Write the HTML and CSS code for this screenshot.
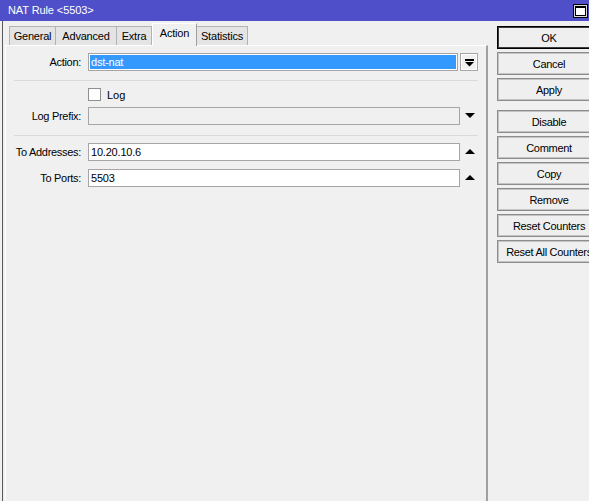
FILE: index.html
```html
<!DOCTYPE html>
<html>
<head>
<meta charset="utf-8">
<title>NAT Rule</title>
<link rel="stylesheet" href="styles.css">
</head>
<body>
<div class="titlebar">
  <span class="title">NAT Rule &lt;5503&gt;</span>
  <svg class="maxbtn" width="15" height="14" viewBox="0 0 15 14">
    <rect x="0.5" y="0.5" width="14" height="13" fill="#d8d8d8" stroke="#000"/>
    <rect x="2.5" y="2.5" width="10" height="9" fill="#fff" stroke="#000"/>
    <rect x="2" y="2" width="11" height="2" fill="#000"/>
  </svg>
</div>
<div class="window">
  <div class="edge"></div>
  <div class="main">
    <div class="tabs">
      <div class="tab t-general">General</div>
      <div class="tab t-advanced">Advanced</div>
      <div class="tab t-extra">Extra</div>
      <div class="tab active t-action">Action</div>
      <div class="tab t-stats">Statistics</div>
    </div>
    <div class="panel">
      <div class="row">
        <label class="lbl">Action:</label>
        <div class="field selected">dst-nat</div>
        <div class="dropbtn">
          <svg width="9" height="8" viewBox="0 0 9 8"><rect x="0" y="0" width="9" height="2" fill="#000"/><polygon points="0,3 9,3 4.5,7.5" fill="#000"/></svg>
        </div>
      </div>
      <div class="sep sep1"></div>
      <div class="checkrow">
        <span class="checkbox"></span>
        <span class="checklbl">Log</span>
      </div>
      <div class="row">
        <label class="lbl">Log Prefix:</label>
        <div class="field wide disabled"></div>
        <div class="arrow">
          <svg width="10" height="6" viewBox="0 0 10 6"><polygon points="0,0 10,0 5,5" fill="#000"/></svg>
        </div>
      </div>
      <div class="sep sep2"></div>
      <div class="row">
        <label class="lbl">To Addresses:</label>
        <div class="field wide">10.20.10.6</div>
        <div class="arrow">
          <svg width="10" height="6" viewBox="0 0 10 6"><polygon points="0,5 10,5 5,0" fill="#000"/></svg>
        </div>
      </div>
      <div class="row row-ports">
        <label class="lbl">To Ports:</label>
        <div class="field wide">5503</div>
        <div class="arrow">
          <svg width="10" height="6" viewBox="0 0 10 6"><polygon points="0,5 10,5 5,0" fill="#000"/></svg>
        </div>
      </div>
    </div>
  </div>
  <div class="buttons">
    <div class="btn default">OK</div>
    <div class="btn">Cancel</div>
    <div class="btn group-end">Apply</div>
    <div class="btn">Disable</div>
    <div class="btn">Comment</div>
    <div class="btn">Copy</div>
    <div class="btn">Remove</div>
    <div class="btn">Reset Counters</div>
    <div class="btn">Reset All Counters</div>
  </div>
</div>
</body>
</html>
```
FILE: styles.css
```css
html, body {
  margin: 0;
  padding: 0;
}
body {
  width: 589px;
  height: 501px;
  overflow: hidden;
  background: #f0f0f0;
  font-family: "Liberation Sans", Arial, sans-serif;
  font-size: 11px;
  color: #000;
}
.titlebar {
  height: 21px;
  background: #4f50c9;
  display: flex;
  align-items: center;
  justify-content: space-between;
  padding: 0 1px 0 8px;
  box-sizing: border-box;
}
.title {
  color: #fff;
  font-size: 11px;
  letter-spacing: -0.1px;
  margin-top: -1px;
}
.maxbtn {
  display: block;
  margin-top: 0;
}
.window {
  display: flex;
  height: 480px;
}
.edge {
  width: 2px;
  border-right: 1px solid #5a5a5a;
  background: #f0f0f0;
  flex: none;
}
.main {
  width: 485px;
  padding-left: 2px;
  box-sizing: border-box;
  display: flex;
  flex-direction: column;
  flex: none;
}
.tabs {
  height: 24px;
  display: flex;
  align-items: flex-end;
  padding-left: 4px;
  box-sizing: border-box;
}
.tab {
  height: 19px;
  box-sizing: border-box;
  background: #e4e4e4;
  border: 1px solid #b3b3b3;
  border-bottom: none;
  display: flex;
  align-items: center;
  justify-content: center;
  letter-spacing: -0.2px;
  padding-bottom: 1px;
}
.tab + .tab {
  border-left: none;
}
.t-general { width: 47px; }
.t-advanced { width: 61px; }
.t-extra { width: 35px; }
.t-action { width: 45px; }
.t-stats { width: 51px; }
.tab.active {
  height: 23px;
  background: #f0f0f0;
  border-left: 1px solid #fff;
  border-top: 1px solid #fff;
  border-right: 1px solid #a0a0a0;
  margin-bottom: -1px;
  position: relative;
  z-index: 1;
  padding-bottom: 4px;
}
.tab.active + .tab {
  border-left: none;
}
.panel {
  flex: 1;
  border-top: 1px solid #fff;
  border-left: 1px solid #fff;
  border-right: 2px solid #a0a0a0;
  padding-top: 7px;
  box-sizing: border-box;
  width: 483px;
}
.row {
  display: flex;
  align-items: center;
  height: 18px;
}
.row-ports {
  margin-top: 8px;
}
.lbl {
  width: 75px;
  text-align: right;
  margin-right: 7px;
  flex: none;
  letter-spacing: -0.3px;
}
.field {
  width: 370px;
  height: 18px;
  box-sizing: border-box;
  border: 1px solid #a5a5a5;
  background: #fff;
  padding-left: 2px;
  line-height: 16px;
  flex: none;
  letter-spacing: -0.2px;
}
.field.wide {
  width: 372px;
}
.field.selected {
  background: #3399ff;
  color: #fff;
  box-shadow: inset 0 0 0 1px #fff;
}
.field.disabled {
  background: #f0f0f0;
}
.dropbtn {
  width: 18px;
  height: 18px;
  margin-left: 2px;
  box-sizing: border-box;
  border: 1px solid #a5a5a5;
  box-shadow: inset 0 0 0 1px #fff;
  background: #f0f0f0;
  display: flex;
  align-items: center;
  justify-content: center;
  flex: none;
}
.dropbtn svg {
  display: block;
  margin-top: 1px;
}
.arrow {
  width: 18px;
  height: 18px;
  display: flex;
  align-items: center;
  justify-content: center;
  flex: none;
}
.arrow svg {
  display: block;
  margin-left: 2px;
}
.sep {
  height: 1px;
  background: #dadada;
  margin: 0 8px;
}
.sep1 {
  margin-top: 9px;
  margin-bottom: 7px;
}
.sep2 {
  margin-top: 10px;
  margin-bottom: 7px;
}
.checkrow {
  display: flex;
  align-items: center;
  height: 13px;
  padding-left: 82px;
  margin-bottom: 6px;
}
.checkbox {
  width: 13px;
  height: 13px;
  box-sizing: border-box;
  border: 1px solid #8f8f8f;
  background: #fff;
  flex: none;
}
.checklbl {
  margin-left: 6px;
}
.buttons {
  margin-left: 9px;
  padding-top: 5px;
  display: flex;
  flex-direction: column;
  gap: 3px;
  flex: none;
}
.btn {
  width: 104px;
  height: 23px;
  box-sizing: border-box;
  border: 1px solid #8c8c8c;
  box-shadow: inset 0 0 0 1px #c4c4c4;
  background: #efefef;
  display: flex;
  align-items: center;
  justify-content: center;
  white-space: nowrap;
  letter-spacing: -0.3px;
}
.btn.default {
  border-color: #000;
  box-shadow: inset 0 0 0 1px #3c3c3c;
}
.btn.group-end {
  margin-bottom: 6px;
}
```
